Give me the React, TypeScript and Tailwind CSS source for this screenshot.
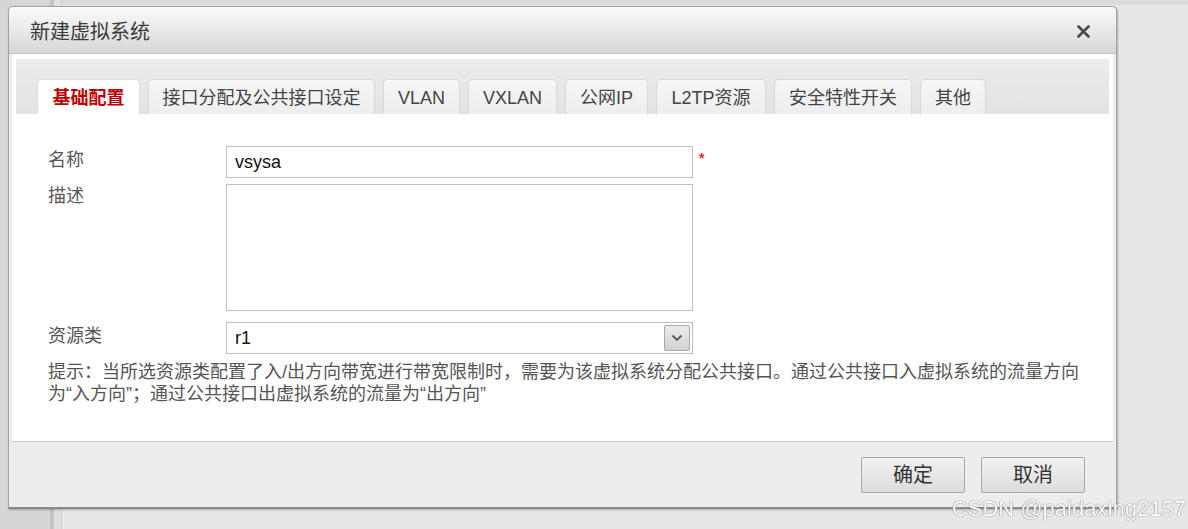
import React from "react";

const tabs: { label: string; w: string }[] = [
  { label: "基础配置", w: "w-[103px]" },
  { label: "接口分配及公共接口设定", w: "w-[227px]" },
  { label: "VLAN", w: "w-[77px]" },
  { label: "VXLAN", w: "w-[89px]" },
  { label: "公网IP", w: "w-[83px]" },
  { label: "L2TP资源", w: "w-[110px]" },
  { label: "安全特性开关", w: "w-[138px]" },
  { label: "其他", w: "w-[66px]" },
];

const font = "font-['Liberation_Sans','Noto_Sans_CJK_SC',sans-serif]";

const App: React.FC = () => {
  const [active, setActive] = React.useState(0);

  return (
    <div className={`relative w-[1188px] h-[529px] overflow-hidden bg-[#e6e6e6] ${font}`}>
      {/* backdrop page */}
      <div className="flex h-full">
        <div className="w-[50px] h-full bg-[#d6d6d6]" />
        <div className="w-[4px] h-full bg-[#c4c4c4]" />
        <div className="w-[8px] h-full bg-[#e0e0e0] border-r border-[#cdcdcd]" />
        <div className="flex-1 flex flex-col">
          <div className="h-[5px] bg-[#dcdcdc]" />
          <div className="flex-1 bg-[#e7e7e7]" />
        </div>
      </div>

      {/* dialog */}
      <div className="absolute left-[8px] top-[6px] w-[1109px] h-[503px] flex flex-col rounded-t-[5px] border border-[#a2a2a2] border-b-[2px] border-b-[#8a8a8a] bg-[#ededed] shadow-[1px_1px_2px_rgba(0,0,0,0.25)]">
        <div className="h-[47px] flex items-center justify-between pl-[21px] pr-[26px] rounded-t-[5px] bg-gradient-to-b from-[#fbfbfb] to-[#d7d7d7] border-b border-[#c4c4c4]">
          <span className="text-[20px] text-[#3a3a3a] mt-[4px]">新建虚拟系统</span>
          <svg width="13" height="13" viewBox="0 0 13 13" className="mt-[2px]">
            <path d="M1.5 1.5 L11.5 11.5 M11.5 1.5 L1.5 11.5" stroke="#4a4a4a" strokeWidth="2.6" strokeLinecap="round" />
          </svg>
        </div>

        <div className="px-[3px]">
          <div className="h-[388px] bg-white border-b border-[#c8c8c8] p-[4px] pt-[5px] flex flex-col">
            {/* tab strip */}
            <div className="h-[55px] flex items-end gap-[8px] pl-[21px] bg-gradient-to-b from-[#ececec] to-[#e3e3e3]">
              {tabs.map((t, i) => (
                <button
                  key={t.label}
                  onClick={() => setActive(i)}
                  className={`${t.w} h-[35px] flex items-center justify-center pt-[2px] rounded-t-[5px] border border-b-0 text-[18px] ${
                    i === active
                      ? "bg-white border-[#dcdcdc] text-[#c00000] font-bold"
                      : "bg-gradient-to-b from-[#f6f6f6] to-[#eeeeee] border-[#d8d8d8] text-[#444]"
                  }`}
                >
                  {t.label}
                </button>
              ))}
            </div>

            {/* form */}
            <div className="pl-[32px] pt-[32px] text-[18px] text-[#555]">
              <div className="flex items-start h-[38px]">
                <div className="w-[178px] pt-[2px] leading-[24px]">名称</div>
                <div className="w-[467px] h-[32px] border border-[#bdbdc2] flex items-center px-[8px] text-[#111] text-[18px]">vsysa</div>
                <span className="ml-[6px] mt-[2px] text-[#ff2020] text-[14px] font-bold">*</span>
              </div>
              <div className="flex items-start h-[138px]">
                <div className="w-[178px] leading-[24px]">描述</div>
                <div className="w-[467px] h-[127px] border border-[#bdbdc2]" />
              </div>
              <div className="flex items-start h-[38px]">
                <div className="w-[178px] pt-[2px] leading-[24px]">资源类</div>
                <div className="w-[467px] h-[32px] border border-[#bdbdc2] flex items-center justify-between pl-[8px] pr-[2px] text-[#111] text-[18px]">
                  <span>r1</span>
                  <div className="w-[26px] h-[26px] rounded-[2px] border border-[#a9a9a9] bg-gradient-to-b from-[#ececec] to-[#d2d2d2] flex items-center justify-center">
                    <svg width="12" height="8" viewBox="0 0 12 8">
                      <path d="M1.5 1.5 L6 6 L10.5 1.5" stroke="#5a5a5a" strokeWidth="1.8" fill="none" />
                    </svg>
                  </div>
                </div>
              </div>
              <p className="w-[1045px] pt-[1px] leading-[22px] text-[18px] text-[#555]">
                提示：当所选资源类配置了入/出方向带宽进行带宽限制时，需要为该虚拟系统分配公共接口。通过公共接口入虚拟系统的流量方向为“入方向”；通过公共接口出虚拟系统的流量为“出方向”
              </p>
            </div>
          </div>
        </div>

        {/* footer */}
        <div className="flex-1 flex items-start justify-end gap-[16px] pt-[15px] pr-[31px]">
          <button className="w-[104px] h-[36px] rounded-[2px] border border-[#a8a8a8] bg-gradient-to-b from-[#f2f2f2] to-[#dcdcdc] text-[20px] text-[#333]">
            确定
          </button>
          <button className="w-[104px] h-[36px] rounded-[2px] border border-[#a8a8a8] bg-gradient-to-b from-[#f2f2f2] to-[#dcdcdc] text-[20px] text-[#333]">
            取消
          </button>
        </div>
      </div>

      {/* watermark */}
      <div className="absolute left-[952px] top-[493px] text-[21.5px] text-white tracking-[0.3px] [text-shadow:0_0_1px_#777,0_0_1px_#777]">
        CSDN @paidaxing2157
      </div>
    </div>
  );
};

export default App;
